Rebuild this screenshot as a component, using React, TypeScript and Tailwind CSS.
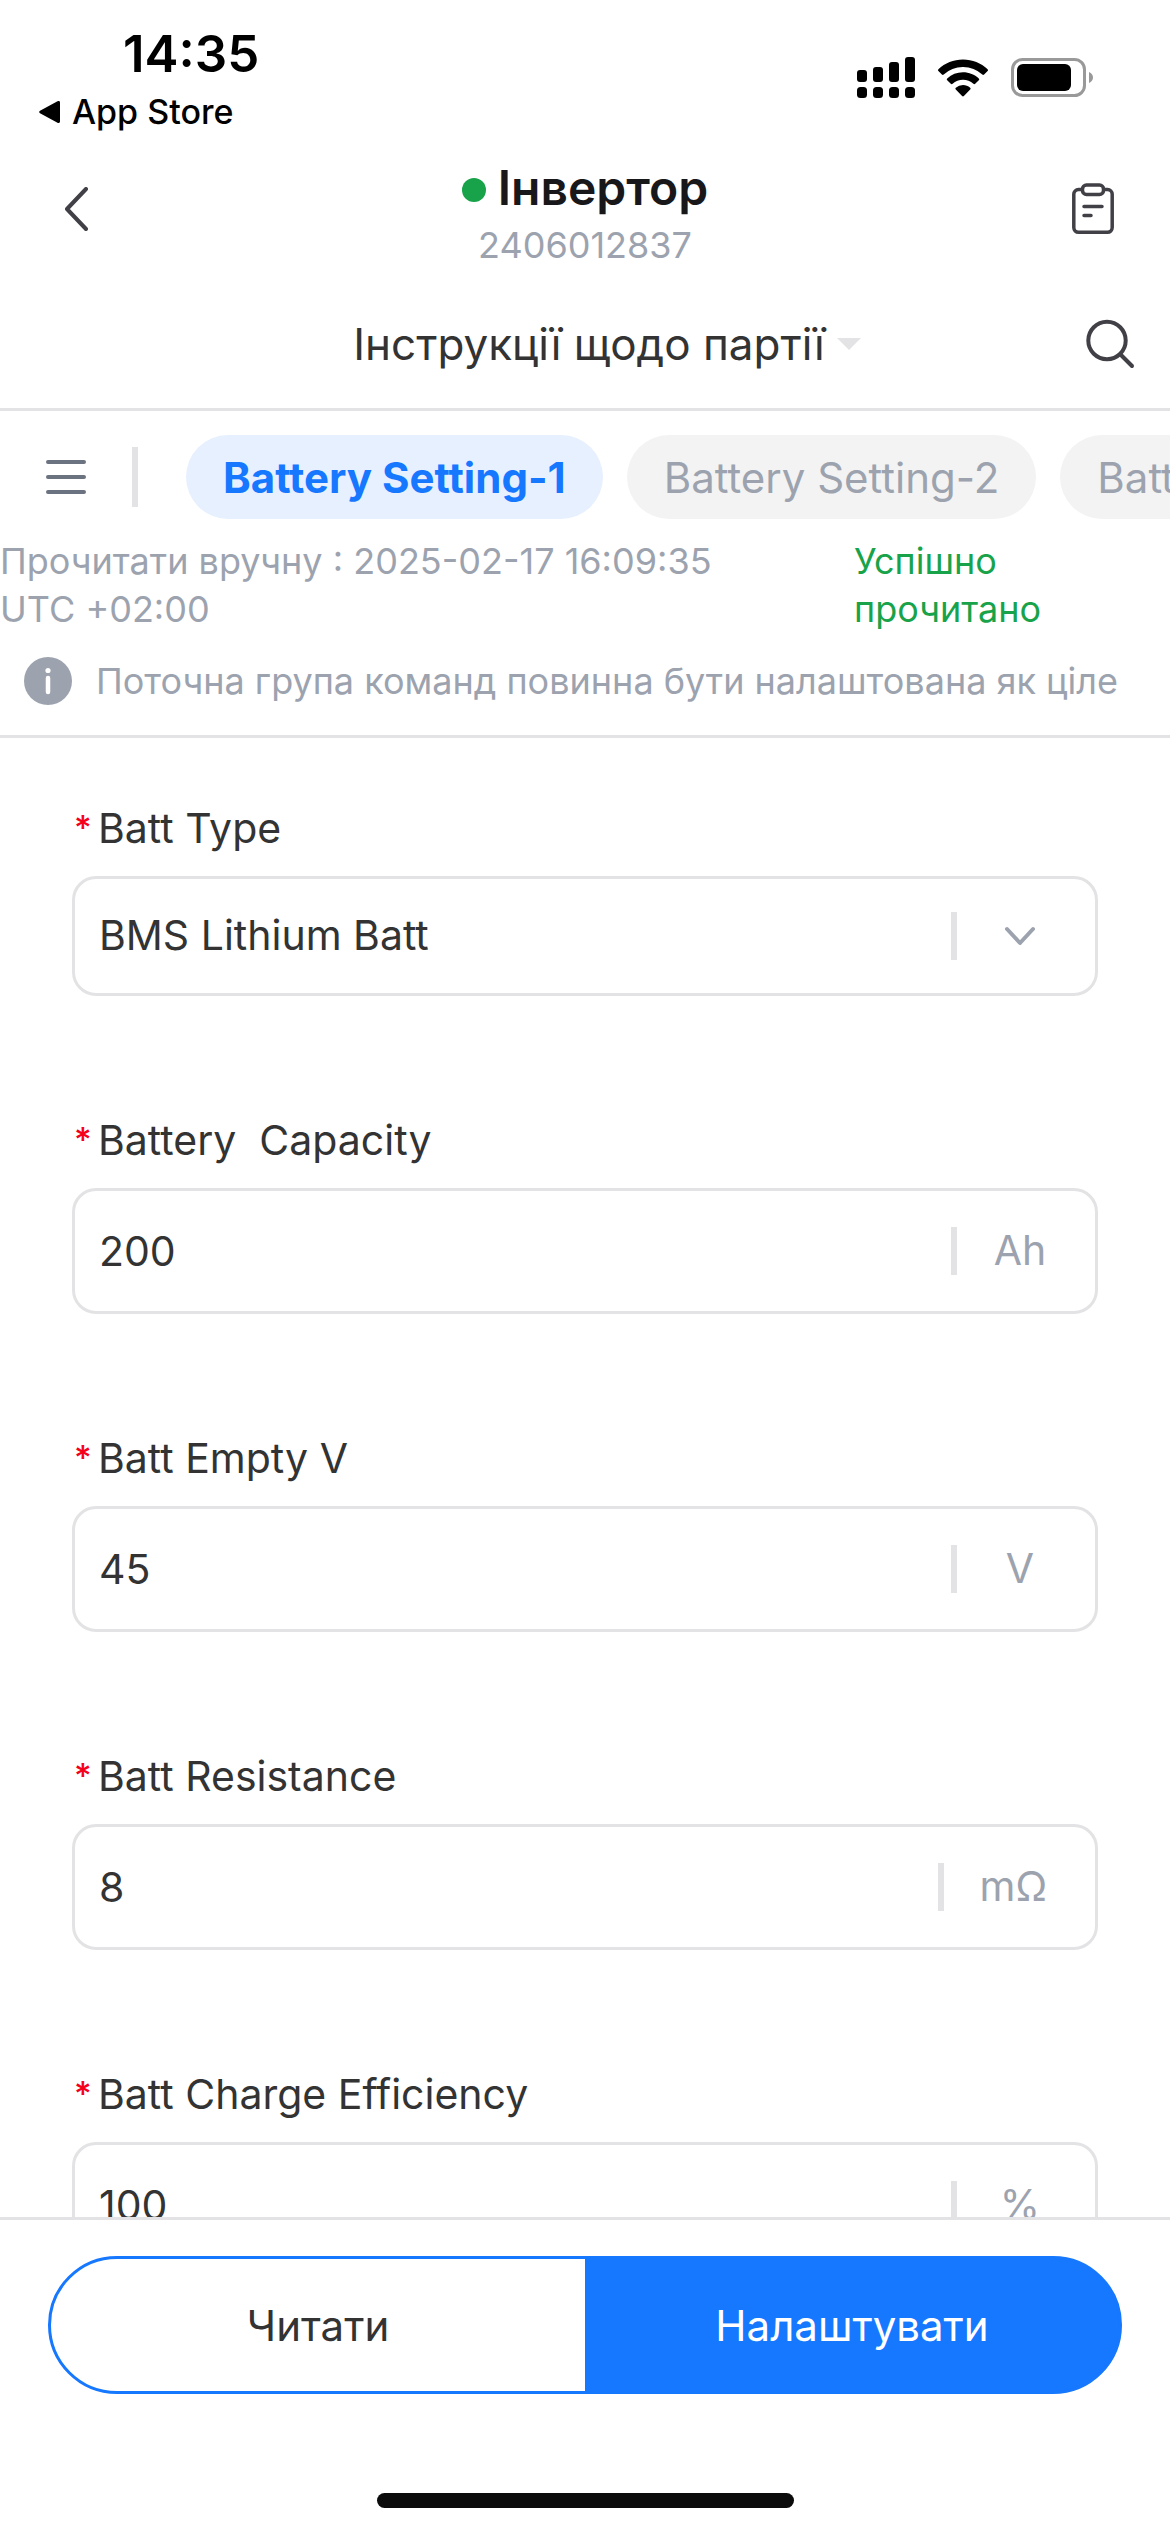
import React from 'react';

interface Field {
  id: string;
  label: string;
  value: string;
  unit?: string;
  options?: string[];
}

const tabs = ['Battery Setting-1', 'Battery Setting-2', 'Battery Setting-3'];

const fields: Field[] = [
  { id: 'batt-type', label: 'Batt Type', value: 'BMS Lithium Batt', options: ['BMS Lithium Batt'] },
  { id: 'batt-capacity', label: 'Battery  Capacity', value: '200', unit: 'Ah' },
  { id: 'batt-empty-v', label: 'Batt Empty V', value: '45', unit: 'V' },
  { id: 'batt-resistance', label: 'Batt Resistance', value: '8', unit: 'mΩ' },
  { id: 'batt-efficiency', label: 'Batt Charge Efficiency', value: '100', unit: '%' },
];

const SignalIcon = () => (
  <svg width="58" height="42" viewBox="0 0 58 42" aria-hidden="true">
    <rect x="0" y="13" width="10" height="12" rx="3" />
    <rect x="16" y="10" width="10" height="15" rx="3" />
    <rect x="32" y="5" width="10" height="20" rx="3" />
    <rect x="48" y="0" width="10" height="25" rx="3" />
    <rect x="0" y="30" width="10" height="11" rx="3.5" />
    <rect x="16" y="30" width="10" height="11" rx="3.5" />
    <rect x="32" y="30" width="10" height="11" rx="3.5" />
    <rect x="48" y="30" width="10" height="11" rx="3.5" />
  </svg>
);

const WifiIcon = () => (
  <svg width="52" height="38" viewBox="0 0 52 38" aria-hidden="true">
    <path d="M26 0.5C35.5 0.5 44 4 50.6 10.2a1.2 1.2 0 0 1 0 1.8l-3.5 3.6a1.3 1.3 0 0 1-1.8 0A28 28 0 0 0 26 8a28 28 0 0 0-19.3 7.6a1.3 1.3 0 0 1-1.8 0L1.4 12a1.2 1.2 0 0 1 0-1.8C8 4 16.5 0.5 26 0.5Z" />
    <path d="M26 13.2c6.1 0 11.6 2.3 15.8 6.2a1.2 1.2 0 0 1 0 1.8l-3.6 3.6a1.3 1.3 0 0 1-1.8 0A15.5 15.5 0 0 0 26 20.8a15.5 15.5 0 0 0-10.4 4a1.3 1.3 0 0 1-1.8 0l-3.6-3.6a1.2 1.2 0 0 1 0-1.8A23 23 0 0 1 26 13.2Z" />
    <path d="M26 26c2.7 0 5.2 1 7.2 2.7a1.2 1.2 0 0 1 0 1.8l-6.3 6.5a1.3 1.3 0 0 1-1.8 0l-6.3-6.5a1.2 1.2 0 0 1 0-1.8A11 11 0 0 1 26 26Z" />
  </svg>
);

const BatteryIcon = () => (
  <svg width="82" height="40" viewBox="0 0 82 40" aria-hidden="true">
    <rect x="1.5" y="1.5" width="72" height="36" rx="10" fill="none" stroke="#999" strokeWidth="3" />
    <rect x="6" y="6" width="54" height="27" rx="6" />
    <path d="M78 14c2.5 1 4 3 4 5.5s-1.5 4.5-4 5.5Z" fill="#999" />
  </svg>
);

const ClipboardIcon = () => (
  <svg width="42" height="52" viewBox="0 0 42 52" fill="none" stroke="#404046" strokeWidth="3.5" strokeLinecap="round" strokeLinejoin="round">
    <path d="M10 6.5H6.5a4.7 4.7 0 0 0-4.7 4.7v33.4a4.7 4.7 0 0 0 4.7 4.7h29a4.7 4.7 0 0 0 4.7-4.7V11.2a4.7 4.7 0 0 0-4.7-4.7H32" />
    <rect x="10.5" y="2" width="21" height="9.5" rx="4" />
    <path d="M12 23.5h18M12 32.5h7" />
  </svg>
);

const SearchIcon = () => (
  <svg width="50" height="50" viewBox="0 0 50 50" fill="none" stroke="#404046" strokeWidth="4" strokeLinecap="round">
    <circle cx="21" cy="21.5" r="18.7" />
    <path d="M34.5 35.5L46 47" />
  </svg>
);

const InfoIcon = () => (
  <svg width="48" height="48" viewBox="0 0 48 48" className="shrink-0" aria-hidden="true">
    <circle cx="24" cy="24" r="24" fill="#9ca3af" />
    <circle cx="24" cy="13.5" r="2.6" fill="#fff" />
    <path d="M24 21v14" stroke="#fff" strokeWidth="4.5" strokeLinecap="round" />
  </svg>
);

const FieldRow: React.FC<{ field: Field }> = ({ field }) => (
  <div className="mb-[114px]">
    <div className="flex items-center leading-[60px]">
      <span className="w-[26px] shrink-0 pl-[2px] text-[34px] font-medium text-[#f5001d]" aria-hidden="true">*</span>
      <label htmlFor={field.id} className="whitespace-pre">{field.label}</label>
    </div>
    <div
      className={`mt-[18px] flex items-center rounded-3xl border-[3px] border-[#e3e3e5] pr-12 ${
        field.options ? 'h-[120px]' : 'h-[126px]'
      }`}
    >
      {field.options ? (
        <select id={field.id} defaultValue={field.value} className="h-full min-w-0 flex-1 appearance-none bg-transparent pl-6 outline-none">
          {field.options.map((option) => (
            <option key={option}>{option}</option>
          ))}
        </select>
      ) : (
        <input id={field.id} defaultValue={field.value} className="h-full min-w-0 flex-1 bg-transparent pl-6 outline-none" />
      )}
      <span className="mr-9 h-12 w-[6px] bg-[#e3e3e5]" />
      <span className="flex min-w-[54px] justify-center text-[#9ca3af]">
        {field.unit ?? (
          <svg width="32" height="20" viewBox="0 0 32 20" fill="none" stroke="#9ca3af" strokeWidth="4" strokeLinecap="round" strokeLinejoin="round">
            <path d="M3 3l13 14L29 3" />
          </svg>
        )}
      </span>
    </div>
  </div>
);

const App: React.FC = () => {
  const [active, setActive] = React.useState(0);

  return (
    <div className="flex h-screen flex-col overflow-hidden bg-white font-['Inter','Liberation_Sans',sans-serif] text-[42px] text-[#333]">
      {/* Status bar */}
      <div className="flex h-[138px] shrink-0 items-start justify-between pr-[77px] pl-[39px] text-black">
        <div className="pt-6">
          <div className="pl-[84px] text-[51px] leading-[60px] font-semibold">14:35</div>
          <a href="#" className="flex items-center gap-3 text-[34px] leading-[56px] font-medium">
            <svg width="21" height="24" viewBox="0 0 21 24" aria-hidden="true">
              <path d="M18.5 1.2a1.6 1.6 0 0 1 2.5 1.3v19a1.6 1.6 0 0 1-2.5 1.3L1 13.3a1.5 1.5 0 0 1 0-2.6Z" />
            </svg>
            App Store
          </a>
        </div>
        <div className="flex items-center gap-[22px] pt-[57px]">
          <SignalIcon />
          <WifiIcon />
          <BatteryIcon />
        </div>
      </div>

      {/* Header */}
      <header className="flex h-[142px] shrink-0 items-center justify-between px-14">
        <button aria-label="Назад" className="flex w-12 items-center pl-2">
          <svg width="24" height="44" viewBox="0 0 24 44" fill="none" stroke="#404046" strokeWidth="4" strokeLinecap="round" strokeLinejoin="round">
            <path d="M22 2L3 22l19 20" />
          </svg>
        </button>
        <div className="pt-3 text-center">
          <h1 className="flex items-center justify-center gap-3 text-[48px] leading-[60px] font-semibold text-[#18181a]">
            <span className="mt-1 h-6 w-6 rounded-full bg-[#18a34a]" />
            Інвертор
          </h1>
          <p className="text-[36px] leading-[54px] text-[#9ca3af]">2406012837</p>
        </div>
        <button aria-label="Журнал" className="flex w-12 justify-end">
          <ClipboardIcon />
        </button>
      </header>

      {/* Command group */}
      <div className="flex h-[131px] shrink-0 items-center border-b-[3px] border-[#e3e3e5] pr-[34px] pl-32">
        <button className="flex flex-1 items-center justify-center gap-3 text-[44px]">
          Інструкції щодо партії
          <svg width="24" height="12" viewBox="0 0 24 12" fill="#e3e3e5" aria-hidden="true">
            <path d="M0 0h24L12 12Z" />
          </svg>
        </button>
        <button aria-label="Пошук">
          <SearchIcon />
        </button>
      </div>

      {/* Tabs */}
      <nav className="flex shrink-0 items-center overflow-hidden pt-6 pl-[45px]">
        <button aria-label="Меню">
          <svg width="42" height="36" viewBox="0 0 42 36" stroke="#6b7280" strokeWidth="4" strokeLinecap="round">
            <path d="M3 3h36M3 18h36M3 33h36" />
          </svg>
        </button>
        <span className="mr-12 ml-[45px] h-[60px] w-[6px] shrink-0 bg-[#e3e3e5]" />
        <div className="flex gap-6">
          {tabs.map((tab, idx) => (
            <button
              key={tab}
              onClick={() => setActive(idx)}
              className={`h-[84px] shrink-0 rounded-full px-[37px] whitespace-nowrap ${
                idx === active ? 'bg-[#e7f0ff] font-bold text-[#1677ff]' : 'bg-[#f3f3f3] text-[#9ca3af]'
              }`}
            >
              {tab}
            </button>
          ))}
        </div>
      </nav>

      {/* Last read and notice */}
      <div className="shrink-0 border-b-[3px] border-[#e3e3e5] pt-[18px] pb-[30px] text-[36px] leading-[48px] text-[#9ca3af]">
        <div className="flex justify-between">
          <p className="w-2/3">Прочитати вручну : 2025-02-17 16:09:35 UTC +02:00</p>
          <p className="w-[27%] text-[#18a34a]">Успішно прочитано</p>
        </div>
        <div className="mt-6 flex items-center gap-6 overflow-hidden pl-6">
          <InfoIcon />
          <p className="whitespace-nowrap">Поточна група команд повинна бути налаштована як ціле</p>
        </div>
      </div>

      <main className="min-h-0 flex-1 overflow-y-auto px-[72px] pt-[60px] text-[41px] [scrollbar-width:none]">
        {fields.map((field) => (
          <FieldRow key={field.id} field={field} />
        ))}
      </main>

      {/* Actions */}
      <footer className="flex shrink-0 flex-col items-center border-t-[3px] border-[#e3e3e5] px-12 pt-9 pb-6">
        <div className="flex h-[138px] w-full overflow-hidden rounded-full border-[3px] border-[#1677ff] bg-linear-to-r from-white from-50% to-[#1677ff] to-50%">
          <button className="flex-1">Читати</button>
          <button className="flex-1 text-white">Налаштувати</button>
        </div>
        <div className="mt-[99px] h-[15px] w-[417px] rounded-full bg-[#0b0b0b]" />
      </footer>
    </div>
  );
};

export default App;
